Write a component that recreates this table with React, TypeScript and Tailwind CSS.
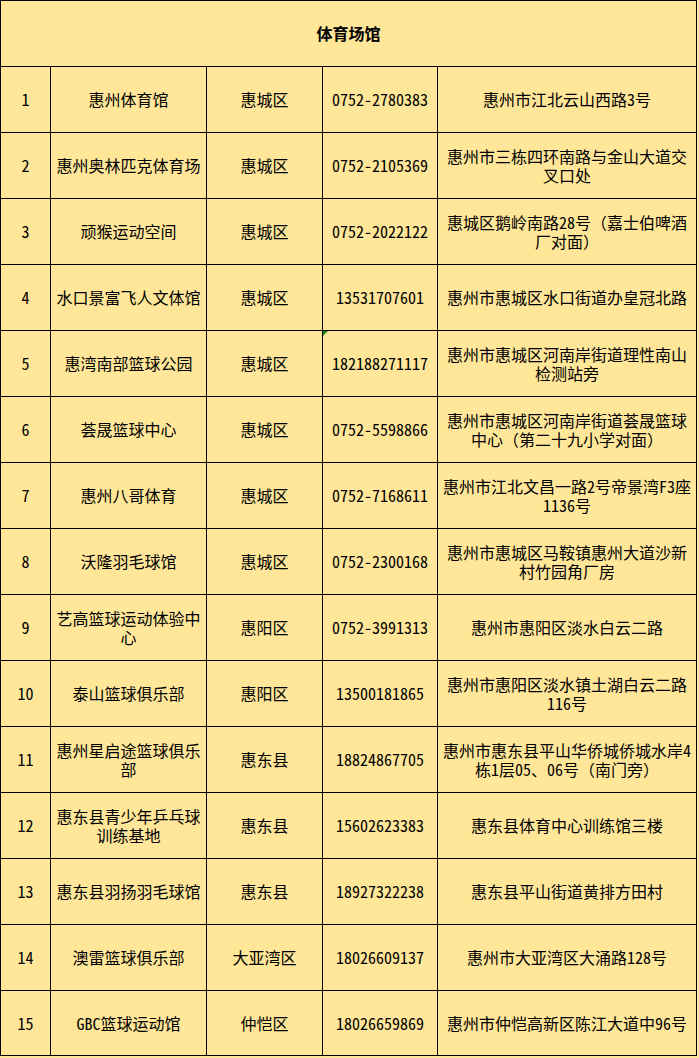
import React from "react";

type Row = {
  no: string;
  name: string[];
  area: string;
  phone: string;
  address: string[];
  flag?: boolean;
};

const rows: Row[] = [
  { no: "1", name: ["惠州体育馆"], area: "惠城区", phone: "0752-2780383", address: ["惠州市江北云山西路3号"] },
  { no: "2", name: ["惠州奥林匹克体育场"], area: "惠城区", phone: "0752-2105369", address: ["惠州市三栋四环南路与金山大道交", "叉口处"] },
  { no: "3", name: ["顽猴运动空间"], area: "惠城区", phone: "0752-2022122", address: ["惠城区鹅岭南路28号（嘉士伯啤酒", "厂对面）"] },
  { no: "4", name: ["水口景富飞人文体馆"], area: "惠城区", phone: "13531707601", address: ["惠州市惠城区水口街道办皇冠北路"] },
  { no: "5", name: ["惠湾南部篮球公园"], area: "惠城区", phone: "182188271117", address: ["惠州市惠城区河南岸街道理性南山", "检测站旁"], flag: true },
  { no: "6", name: ["荟晟篮球中心"], area: "惠城区", phone: "0752-5598866", address: ["惠州市惠城区河南岸街道荟晟篮球", "中心（第二十九小学对面）"] },
  { no: "7", name: ["惠州八哥体育"], area: "惠城区", phone: "0752-7168611", address: ["惠州市江北文昌一路2号帝景湾F3座", "1136号"] },
  { no: "8", name: ["沃隆羽毛球馆"], area: "惠城区", phone: "0752-2300168", address: ["惠州市惠城区马鞍镇惠州大道沙新", "村竹园角厂房"] },
  { no: "9", name: ["艺高篮球运动体验中", "心"], area: "惠阳区", phone: "0752-3991313", address: ["惠州市惠阳区淡水白云二路"] },
  { no: "10", name: ["泰山篮球俱乐部"], area: "惠阳区", phone: "13500181865", address: ["惠州市惠阳区淡水镇土湖白云二路", "116号"] },
  { no: "11", name: ["惠州星启途篮球俱乐", "部"], area: "惠东县", phone: "18824867705", address: ["惠州市惠东县平山华侨城侨城水岸4", "栋1层05、06号（南门旁）"] },
  { no: "12", name: ["惠东县青少年乒乓球", "训练基地"], area: "惠东县", phone: "15602623383", address: ["惠东县体育中心训练馆三楼"] },
  { no: "13", name: ["惠东县羽扬羽毛球馆"], area: "惠东县", phone: "18927322238", address: ["惠东县平山街道黄排方田村"] },
  { no: "14", name: ["澳雷篮球俱乐部"], area: "大亚湾区", phone: "18026609137", address: ["惠州市大亚湾区大涌路128号"] },
  { no: "15", name: ["GBC篮球运动馆"], area: "仲恺区", phone: "18026659869", address: ["惠州市仲恺高新区陈江大道中96号"] },
];

const font = {
  fontFamily: '"Noto Sans Mono CJK SC", "Noto Sans CJK SC", "Liberation Mono", monospace',
};

function Cell({ lines, last, children }: { lines: string[]; last?: boolean; children?: React.ReactNode }) {
  return (
    <div
      className={`relative flex items-center justify-center border-r border-b border-black text-center text-[16px] leading-[19px] text-black ${
        last ? "h-[65px]" : "h-[66px]"
      }`}
    >
      {children}
      <p className="whitespace-nowrap">
        {lines.map((l, i) => (
          <React.Fragment key={i}>
            {i > 0 ? <br /> : null}
            {l}
          </React.Fragment>
        ))}
      </p>
    </div>
  );
}

export default function App() {
  return (
    <div className="min-h-screen w-full bg-[#ffe699]" style={font}>
      <div className="grid w-[697px] grid-cols-[50px_156px_116px_115px_259px] border-l border-t border-black">
        <div className="col-span-5 flex h-[66px] items-center justify-center border-r border-b border-black pb-[2px] text-[16px] font-bold text-black">
          体育场馆
        </div>
        {rows.map((r, idx) => {
          const last = idx === rows.length - 1;
          return (
            <React.Fragment key={r.no}>
              <Cell lines={[r.no]} last={last} />
              <Cell lines={r.name} last={last} />
              <Cell lines={[r.area]} last={last} />
              <Cell lines={[r.phone]} last={last}>
                {r.flag ? (
                  <span className="absolute left-0 top-0 h-0 w-0 border-t-[5px] border-r-[5px] border-t-[#1e8a1e] border-r-transparent" />
                ) : null}
              </Cell>
              <Cell lines={r.address} last={last} />
            </React.Fragment>
          );
        })}
      </div>
    </div>
  );
}
